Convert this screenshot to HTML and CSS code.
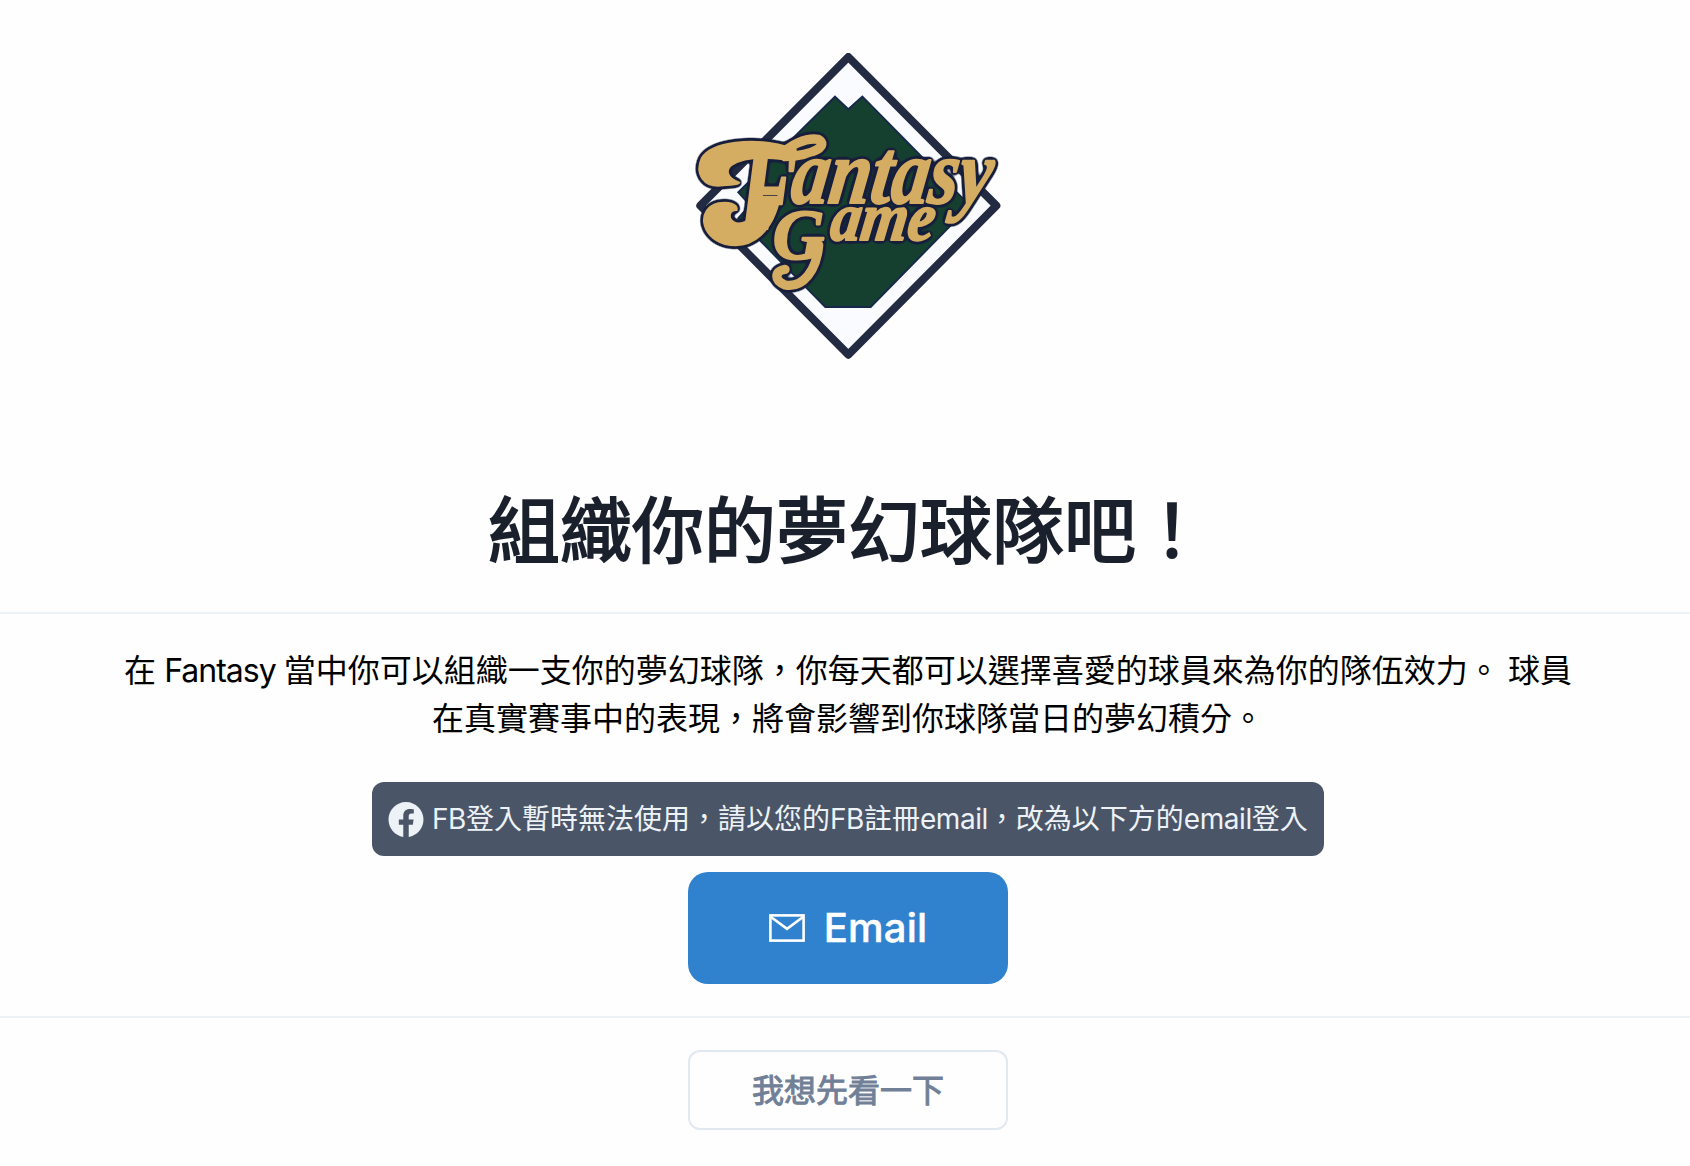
FILE: index.html
```html
<!DOCTYPE html>
<html lang="zh-Hant">
<head>
<meta charset="utf-8">
<title>Fantasy Game</title>
<link rel="stylesheet" href="styles.css">
</head>
<body>
<main class="page">
  <header class="hero">
    <svg class="logo" viewBox="-6 0 1080 1050" role="img" aria-label="Fantasy Game">
      <defs>
        <filter id="outline" filterUnits="userSpaceOnUse" x="0" y="240" width="1070" height="600" color-interpolation-filters="sRGB">
          <feGaussianBlur in="SourceAlpha" stdDeviation="8"/>
          <feComponentTransfer result="edge"><feFuncA type="linear" slope="9" intercept="-0.6"/></feComponentTransfer>
          <feFlood flood-color="#161e3b"/>
          <feComposite in2="edge" operator="in" result="rim"/>
          <feMerge><feMergeNode in="rim"/><feMergeNode in="SourceGraphic"/></feMerge>
        </filter>
      </defs>
      <path class="diamond" d="M535 81 L979 527 L535 974 L91 527 Z"/>
      <path class="field" d="M495 200 L535 238 L577 200 L900 527 L602 831 L466 831 L205 565 L240 525 L205 487 Z"/>
      <g class="lettering" filter="url(#outline)">
        <path d="M350 350 C250 322 125 335 95 385 C75 430 100 475 160 466 C190 463 205 465 208 458 C170 445 165 420 185 405 C215 384 270 378 345 388 Z"/>
        <path d="M330 500 C310 600 250 662 165 642 C90 620 80 535 145 520 C175 514 203 522 200 540 C175 540 170 570 200 580 C235 585 255 550 265 500 Z"/>
        <path class="ribbon" d="M335 376 C355 345 410 322 445 328 C475 345 440 375 345 380"/>
        <text class="initial" x="205" y="598" textLength="178" lengthAdjust="spacingAndGlyphs">F</text>
      </g>
      <g class="lettering" filter="url(#outline)">
        <path class="ribbon" d="M446 645 C440 720 400 775 345 765 C310 750 315 722 345 718"/>
        <text class="second" x="308" y="688" textLength="155" lengthAdjust="spacingAndGlyphs">G</text>
      </g>
      <g class="lettering" filter="url(#outline)">
        <text class="word-small" transform="translate(476 630) skewX(-8)" textLength="312" lengthAdjust="spacingAndGlyphs">ame</text>
      </g>
      <g class="lettering" filter="url(#outline)">
        <text class="word" transform="translate(357 519) skewX(-8)" textLength="600" lengthAdjust="spacingAndGlyphs">antasy</text>
      </g>
    </svg>
    <h1 class="title">組織你的夢幻球隊吧！</h1>
  </header>
  <section class="signin">
    <p class="intro">在 <span class="latin">Fantasy</span> 當中你可以組織一支你的夢幻球隊，你每天都可以選擇喜愛的球員來為你的隊伍效力。 球員<br>在真實賽事中的表現，將會影響到你球隊當日的夢幻積分。</p>
    <div class="notice">
      <svg class="notice-icon" viewBox="0 0 24 24" aria-hidden="true"><path d="M24 12.07C24 5.4 18.63 0 12 0S0 5.4 0 12.07C0 18.1 4.39 23.1 10.13 24v-8.44H7.08v-3.49h3.05V9.41c0-3.02 1.79-4.69 4.53-4.69 1.31 0 2.68.24 2.68.24v2.97h-1.51c-1.49 0-1.96.93-1.96 1.89v2.25h3.33l-.53 3.49h-2.8V24C19.61 23.1 24 18.1 24 12.07z"/></svg>
      <span class="notice-text"><span class="latin-sm">FB</span>登入暫時無法使用，請以您的<span class="latin-sm">FB</span>註冊<span class="latin-sm">email</span>，改為以下方的<span class="latin-sm">email</span>登入</span>
    </div>
    <button class="email" type="button">
      <svg class="email-icon" viewBox="0 0 36 28" aria-hidden="true"><rect x="1.4" y="1.4" width="33.2" height="25.2"/><path d="M2 3 L18 14.8 L34 3"/></svg>
      <span>Email</span>
    </button>
  </section>
  <footer class="footer">
    <button class="preview" type="button">我想先看一下</button>
  </footer>
</main>
</body>
</html>
```
FILE: styles.css
```css
* { box-sizing: border-box; }
html { overflow: hidden; }
body {
  margin: 0;
  background: #fefefe;
  color: #000;
  font-family: Inter, "Noto Sans CJK TC", sans-serif;
}
.page { width: 1696px; }
.hero, .signin, .footer {
  display: flex;
  flex-direction: column;
  align-items: center;
}
.hero {
  height: 614px;
  padding-top: 30px;
  border-bottom: 2px solid #edf2f7;
}
.logo { width: 360px; height: 350px; flex: none; overflow: visible; filter: blur(0.5px); }
.diamond { fill: #fafbfe; stroke: #232b42; stroke-width: 24; stroke-linejoin: round; }
.field { fill: #15402f; stroke: #17294a; stroke-width: 6; }
.lettering {
  fill: #d5ad62;
  stroke: #d5ad62;
  stroke-width: 6;
  stroke-linejoin: round;
  stroke-linecap: round;
  font-family: "Liberation Serif", serif;
  font-weight: 700;
  font-style: italic;
}
.ribbon { fill: none; stroke-width: 28; }
.initial { font-size: 360px; }
.second { font-size: 214px; }
.word { font-size: 276px; }
.word-small { font-size: 206px; }
.title {
  margin: 97px 0 0;
  font-size: 72px;
  font-weight: 400;
  -webkit-text-stroke: 1.9px #1a202c;
  line-height: 108px;
  color: #1a202c;
}
.signin {
  height: 404px;
  padding-top: 33px;
  border-bottom: 2px solid #edf2f7;
}
.intro {
  margin: 0 0 39px;
  font-size: 32px;
  line-height: 48px;
  text-align: center;
  white-space: nowrap;
  word-spacing: -0.8px;
}
.latin { letter-spacing: -1px; }
.latin-sm { letter-spacing: -0.45px; }
.notice {
  display: flex;
  align-items: center;
  gap: 8px;
  width: 952px;
  height: 74px;
  padding: 0 16px;
  border-radius: 12px;
  background: #4a5568;
  color: #edf2f7;
  font-size: 28px;
  line-height: 42px;
  white-space: nowrap;
}
.notice-icon { width: 36px; height: 35px; fill: currentColor; flex: none; }
.email {
  display: flex;
  align-items: center;
  justify-content: center;
  gap: 19px;
  width: 320px;
  height: 112px;
  margin-top: 16px;
  border: 0;
  border-radius: 20px;
  background: #3182ce;
  color: #fff;
  font: 500 40px/48px Inter, sans-serif;
  -webkit-text-stroke: 0.5px #fff;
  letter-spacing: 0.2px;
}
.email-icon { width: 36px; height: 28px; fill: none; stroke: currentColor; stroke-width: 2.6; }
.footer { padding-top: 32px; }
.preview {
  width: 320px;
  height: 80px;
  padding: 2px 0 0;
  border: 2px solid #e2e8f0;
  border-radius: 12px;
  background: transparent;
  color: #718096;
  font: 400 32px/48px Inter, "Noto Sans CJK TC", sans-serif;
  -webkit-text-stroke: 1px #718096;
}
```
